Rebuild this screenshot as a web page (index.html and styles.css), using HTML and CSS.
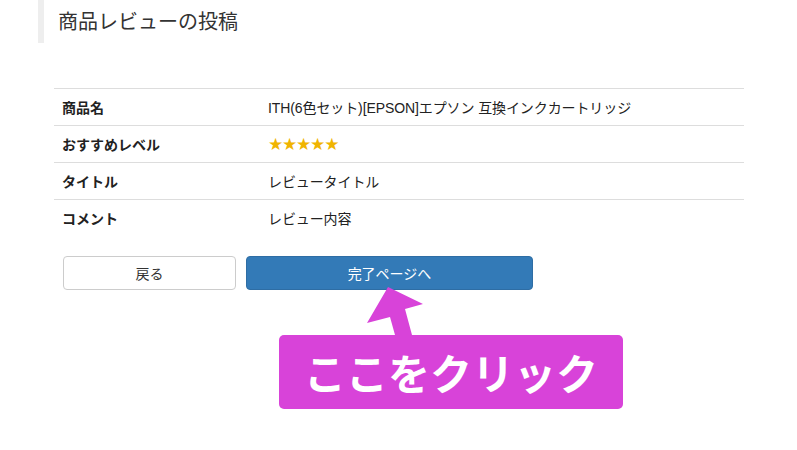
FILE: index.html
```html
<!DOCTYPE html>
<html lang="ja">
<head>
<meta charset="utf-8">
<link rel="stylesheet" href="styles.css">
</head>
<body>
<div class="page">
  <h1 class="heading">商品レビューの投稿</h1>
  <table class="review">
    <tr><th>商品名</th><td>ITH(6色セット)[EPSON]エプソン 互換インクカートリッジ</td></tr>
    <tr><th>おすすめレベル</th><td><span class="stars">★★★★★</span></td></tr>
    <tr><th>タイトル</th><td>レビュータイトル</td></tr>
    <tr><th>コメント</th><td>レビュー内容</td></tr>
  </table>
  <div class="actions">
    <button class="btn btn-back">戻る</button>
    <button class="btn btn-primary">完了ページへ</button>
  </div>
  <svg class="arrow" width="60" height="60" viewBox="0 0 60 60">
    <polygon points="28,0 63,17 45,22 52,48 35,48 30,30 7,36" fill="#d843d9"/>
  </svg>
  <div class="callout">ここをクリック</div>
</div>
</body>
</html>
```
FILE: styles.css
```css
html, body { margin: 0; padding: 0; background: #fff; }
body {
  font-family: "Liberation Sans", "Noto Sans CJK JP", sans-serif;
  color: #222;
}
.page { position: relative; width: 797px; height: 450px; overflow: hidden; }
.heading {
  margin: 0 0 0 38px;
  height: 43px;
  box-sizing: border-box;
  border-left: 6px solid #eee;
  padding: 8px 0 0 14px;
  font-size: 20px;
  font-weight: normal;
  line-height: 26px;
  color: #333;
  font-family: "Noto Sans CJK JP", sans-serif;
}
.review {
  margin: 45px 0 0 54px;
  width: 690px;
  border-collapse: collapse;
  font-size: 14px;
}
.review th, .review td {
  border-top: 1px solid #ddd;
  height: 36px;
  padding: 0 0 0 8px;
  text-align: left;
  vertical-align: middle;
}
.review th {
  width: 206px;
  font-weight: bold;
  font-family: "Noto Sans CJK JP", sans-serif;
  color: #222;
}
.review td { padding-left: 0; color: #222; letter-spacing: -0.1px; }
.stars { color: #f0b400; font-size: 17px; letter-spacing: -1.2px; font-family: "DejaVu Sans", sans-serif; }
.actions {
  display: flex;
  gap: 10px;
  margin: 20px 0 0 63px;
}
.btn {
  height: 34px;
  border-radius: 4px;
  font-size: 14px;
  font-family: "Noto Sans CJK JP", sans-serif;
  padding: 0;
}
.btn-back {
  width: 173px;
  background: #fff;
  border: 1px solid #ccc;
  color: #333;
}
.btn-primary {
  width: 287px;
  background: #337ab7;
  border: 1px solid #2e6da4;
  color: #fff;
}
.arrow { position: absolute; left: 360px; top: 287px; overflow: visible; }
.callout {
  position: absolute;
  left: 279px;
  top: 335px;
  width: 344px;
  height: 74px;
  box-sizing: border-box;
  background: #d843d9;
  border-radius: 5px;
  color: #fff;
  font-family: "Noto Sans CJK JP", sans-serif;
  font-weight: bold;
  font-size: 42px;
  line-height: 74px;
  text-align: center;
  letter-spacing: 0;
}
```
